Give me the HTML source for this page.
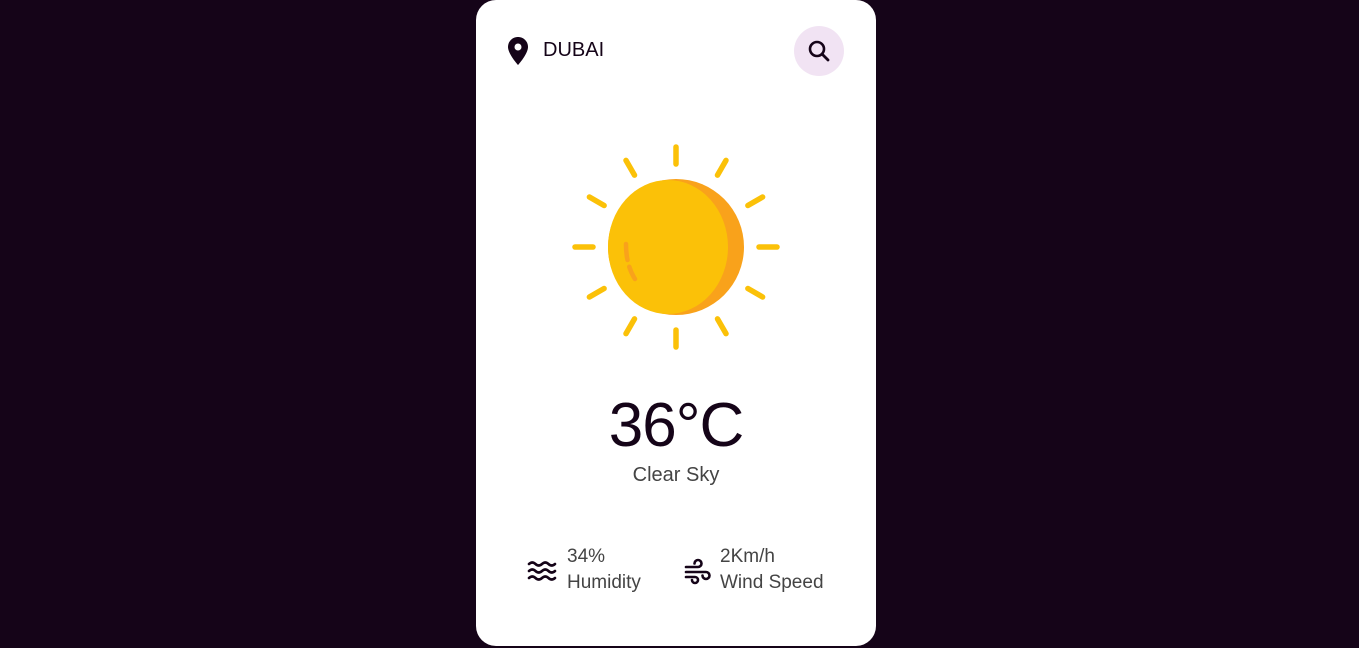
<!DOCTYPE html>
<html><head><style>
html,body{margin:0;padding:0;width:1359px;height:648px;background:#150418;overflow:hidden;font-family:"Liberation Sans",sans-serif;}
.card{position:absolute;left:476px;top:0;width:400px;height:646px;background:#fff;border-radius:20px;}
.city{position:absolute;left:543px;top:39px;font-size:20px;color:#150418;}
.srch{position:absolute;left:794px;top:26px;width:50px;height:50px;border-radius:50%;background:#f1e3f3;}
.temp{position:absolute;left:476px;width:400px;text-align:center;top:390px;font-size:62px;color:#150418;letter-spacing:-1px;}
.desc{position:absolute;left:476px;width:400px;text-align:center;top:464px;font-size:20px;color:#444;}
.t{position:absolute;font-size:19px;color:#444;line-height:26px;}
</style></head><body>
<div class="card"></div>
<svg style="position:absolute;left:507px;top:36px" width="22" height="30" viewBox="0 0 22 30"><path d="M11 1C5.5 1 1 5.3 1 11c0 7 10 18 10 18s10-11 10-18C21 5.3 16.5 1 11 1z" fill="#150418"/><circle cx="11" cy="11" r="3.5" fill="#fff"/></svg>
<div class="city">DUBAI</div>
<div class="srch"><svg width="50" height="50" viewBox="0 0 50 50"><circle cx="23" cy="23" r="7" fill="none" stroke="#150418" stroke-width="2.6"/><path d="M28 28l6 6" stroke="#150418" stroke-width="2.8" stroke-linecap="round"/></svg></div>
<svg style="position:absolute;left:566px;top:137px" width="220" height="220" viewBox="-110 -110 220 220">
<g stroke="#fbc108" stroke-width="5.5" stroke-linecap="round">
<line x1="0" y1="-83" x2="0" y2="-100"/><line x1="0" y1="83" x2="0" y2="100"/>
<line x1="-83" y1="0" x2="-101" y2="0"/><line x1="83" y1="0" x2="101" y2="0"/>
<g transform="rotate(30)"><line x1="0" y1="-83" x2="0" y2="-100"/><line x1="0" y1="83" x2="0" y2="100"/><line x1="-83" y1="0" x2="-100" y2="0"/><line x1="83" y1="0" x2="100" y2="0"/></g>
<g transform="rotate(60)"><line x1="0" y1="-83" x2="0" y2="-100"/><line x1="0" y1="83" x2="0" y2="100"/><line x1="-83" y1="0" x2="-100" y2="0"/><line x1="83" y1="0" x2="100" y2="0"/></g>
</g>
<circle cx="0" cy="0" r="68" fill="#f9a21b"/>
<ellipse cx="-8" cy="0" rx="60" ry="67" fill="#fbc108"/>
<path d="M-50 -3 Q-50 18 -41 32" fill="none" stroke="#f9a21b" stroke-width="4.5" stroke-linecap="round" stroke-dasharray="16 7"/>
</svg>
<div class="temp">36°C</div>
<div class="desc">Clear Sky</div>
<svg style="position:absolute;left:527px;top:560px" width="30" height="24" viewBox="0 0 30 24" fill="none" stroke="#150418" stroke-width="2.6" stroke-linecap="round"><path d="M2 4q3.3-3 6.5 0t6.5 0 6.5 0 6.5 0M2 11q3.3-3 6.5 0t6.5 0 6.5 0 6.5 0M2 18q3.3-3 6.5 0t6.5 0 6.5 0 6.5 0"/></svg>
<svg style="position:absolute;left:684px;top:558px" width="28" height="28" viewBox="0 0 28 28" fill="none" stroke="#150418" stroke-width="2.6" stroke-linecap="round"><path d="M2 9h12a3.5 3.5 0 1 0-3.5-3.5M2 14h20a3.5 3.5 0 1 1-3.5 3.5M2 19h9a3 3 0 1 1-3 3"/></svg>
<div class="t" style="left:567px;top:544px">34%<br>Humidity</div>
<div class="t" style="left:720px;top:544px">2Km/h<br>Wind Speed</div>
</body></html>
